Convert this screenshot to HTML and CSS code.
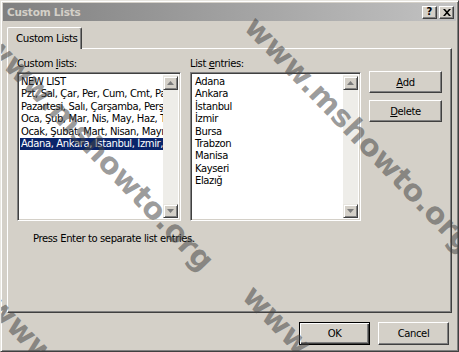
FILE: index.html
```html
<!DOCTYPE html>
<html>
<head>
<meta charset="utf-8">
<link rel="stylesheet" href="styles.css">
</head>
<body>
<div class="window">
  <div class="titlebar">
    <span class="title">Custom Lists</span>
    <div class="caption-btns">
      <span class="cbtn">?</span>
      <span class="cbtn">
        <svg width="8" height="7" viewBox="0 0 8 7"><path d="M0 0h2l2 2.3L6 0h2L5 3.5 8 7H6L4 4.7 2 7H0l3-3.5z" fill="#000"/></svg>
      </span>
    </div>
  </div>
  <div class="body">
    <div class="tabs"><div class="tab">Custom Lists</div></div>
    <div class="panel">
      <div class="row">
        <div class="col col-left">
          <div class="label">Custom <u>l</u>ists:</div>
          <div class="listbox lb-left">
            <div class="items">
              <div class="item">NEW LIST</div>
              <div class="item">Pzt, Sal, Çar, Per, Cum, Cmt, Paz</div>
              <div class="item">Pazartesi, Salı, Çarşamba, Perşembe</div>
              <div class="item">Oca, Şub, Mar, Nis, May, Haz, Tem</div>
              <div class="item">Ocak, Şubat, Mart, Nisan, Mayıs</div>
              <div class="item sel">Adana, Ankara, İstanbul, İzmir, Bursa</div>
            </div>
            <div class="scroll">
              <div class="arrow up"><svg width="7" height="4" viewBox="0 0 7 4"><path d="M3.5 0L7 4H0z" fill="#7a7a7a"/></svg></div>
              <div class="track"></div>
              <div class="arrow down"><svg width="7" height="4" viewBox="0 0 7 4"><path d="M0 0h7L3.5 4z" fill="#7a7a7a"/></svg></div>
            </div>
          </div>
        </div>
        <div class="col col-mid">
          <div class="label">List <u>e</u>ntries:</div>
          <div class="listbox lb-right">
            <div class="items entries">
              <div class="item">Adana</div>
              <div class="item">Ankara</div>
              <div class="item">İstanbul</div>
              <div class="item">İzmir</div>
              <div class="item">Bursa</div>
              <div class="item">Trabzon</div>
              <div class="item">Manisa</div>
              <div class="item">Kayseri</div>
              <div class="item">Elazığ</div>
            </div>
            <div class="scroll">
              <div class="arrow up"><svg width="7" height="4" viewBox="0 0 7 4"><path d="M3.5 0L7 4H0z" fill="#7a7a7a"/></svg></div>
              <div class="track"></div>
              <div class="arrow down"><svg width="7" height="4" viewBox="0 0 7 4"><path d="M0 0h7L3.5 4z" fill="#7a7a7a"/></svg></div>
            </div>
          </div>
        </div>
        <div class="col col-btns">
          <div class="btn"><u>A</u>dd</div>
          <div class="btn"><u>D</u>elete</div>
        </div>
      </div>
      <div class="hint">Press Enter to separate list entries.</div>
    </div>
    <div class="footer">
      <div class="btn btn-ok">OK</div>
      <div class="btn btn-foot">Cancel</div>
    </div>
  </div>
  <span class="wm wm1">www.mshowto.org</span>
  <span class="wm wm2">www.mshowto.org</span>
  <span class="wm wm3">www.mshowto.org</span>
  <span class="wm wm4">www.mshowto.org</span>
</div>
</body>
</html>
```
FILE: styles.css
```css
* { box-sizing: border-box; }
html, body { margin: 0; padding: 0; }
body {
  width: 459px; height: 352px; overflow: hidden;
  background: #d4d0c8;
  font-family: "DejaVu Sans", Verdana, sans-serif;
  font-size: 10px;
  letter-spacing: -0.38px;
  color: #000;
}
.window {
  position: relative;
  width: 459px; height: 352px;
  background: #d4d0c8;
  border: 1px solid;
  border-color: #e8e6e0 #404040 #404040 #e8e6e0;
  box-shadow: inset 1px 1px 0 #fff, inset -1px -1px 0 #808080;
  padding: 2px;
  overflow: hidden;
}
.titlebar {
  height: 18px;
  background: linear-gradient(to right, #808080, #c2c2c2);
  display: flex; align-items: center; justify-content: space-between;
  padding: 0 2px 0 4px;
}
.title { color: #d4d0c8; font-weight: bold; font-size: 10.5px; letter-spacing: -0.2px; }
.caption-btns { display: flex; gap: 2px; }
.cbtn {
  width: 15px; height: 13px;
  background: #d4d0c8;
  border: 1px solid; border-color: #fff #404040 #404040 #fff;
  box-shadow: inset -1px -1px 0 #808080;
  display: flex; align-items: center; justify-content: center;
  font-weight: bold; font-size: 10px; line-height: 1; letter-spacing: 0;
}
.body { padding: 6px 4px 0 4px; }
.tabs { display: flex; height: 21px; position: relative; z-index: 1; }
.tab {
  width: 75px; height: 22px;
  padding: 4px 0 0 8px;
  white-space: nowrap;
  background: #d4d0c8;
  border-top: 1px solid #fff; border-left: 1px solid #fff;
  border-right: 1px solid #404040;
  box-shadow: inset -1px 0 0 #808080;
  border-radius: 2px 2px 0 0;
  font-size: 10.3px;
}
.panel {
  height: 265px;
  border: 1px solid; border-color: #fff #404040 #404040 #fff;
  box-shadow: inset -1px -1px 0 #808080;
  padding: 8px 0 0 9px;
}
.row { display: flex; }
.col-left { width: 164px; margin-right: 9px; }
.col-mid { width: 171px; margin-right: 8px; }
.label { height: 15px; line-height: 13px; font-size: 10px; }
.listbox {
  height: 149px; display: flex;
  background: #fff;
  border: 1px solid; border-color: #808080 #fff #fff #808080;
  box-shadow: inset 1px 1px 0 #404040, inset -1px -1px 0 #d4d0c8;
  padding: 2px;
}
.items { flex: 1; overflow: hidden; padding-top: 1px; }
.item { height: 12.4px; line-height: 12.4px; white-space: nowrap; padding-left: 1px; font-size: 10px; }
.entries .item { padding-left: 2px; }
.item.sel { background: #0a246a; color: #fff; }
.scroll { width: 15px; display: flex; flex-direction: column; background: #eeede9; }
.track { flex: 1; }
.arrow {
  height: 14px; background: #d4d0c8;
  border: 1px solid; border-color: #e8e6e0 #404040 #404040 #e8e6e0;
  box-shadow: inset 1px 1px 0 #fff, inset -1px -1px 0 #808080;
  display: flex; align-items: center; justify-content: center;
}
.up { margin-top: 1px; }
.col-btns { display: flex; flex-direction: column; gap: 7px; padding-top: 14px; }
.btn {
  width: 73px; height: 22px;
  background: #d4d0c8;
  border: 1px solid; border-color: #fff #404040 #404040 #fff;
  box-shadow: inset -1px -1px 0 #808080;
  display: flex; align-items: center; justify-content: center;
  font-size: 10px;
}
.hint { padding: 12px 0 0 16px; font-size: 10px; }
.footer { display: flex; justify-content: flex-end; gap: 8px; padding: 9px 3px 0 0; }
.btn-foot { width: 71px; height: 23px; }
.btn-ok {
  width: 71px; height: 23px;
  border: 1px solid #000;
  box-shadow: inset 1px 1px 0 #fff, inset -1px -1px 0 #404040, inset -2px -2px 0 #808080;
}
.wm {
  position: absolute;
  transform-origin: 0 0;
  transform: rotate(46deg);
  font-family: "DejaVu Sans", sans-serif;
  font-weight: bold;
  font-size: 30px;
  letter-spacing: 0;
  color: rgba(70, 70, 70, 0.55);
  white-space: nowrap;
  pointer-events: none;
}
.wm1 { left: 262px; top: 8px; }
.wm2 { left: 2px; top: 26px; }
.wm3 { left: 5px; top: 287px; }
.wm4 { left: 260px; top: 277px; }
```
